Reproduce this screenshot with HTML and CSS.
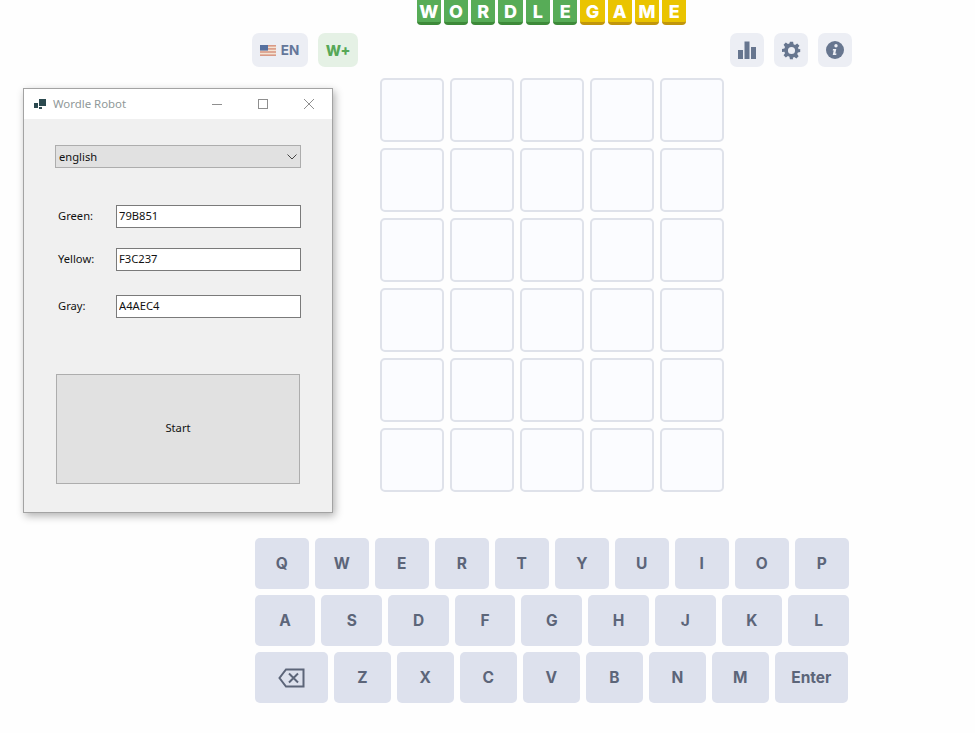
FILE: index.html
```html
<!DOCTYPE html>
<html lang="en">
<head>
<meta charset="UTF-8">
<meta name="viewport" content="width=device-width, initial-scale=1.0">
<title>Wordle Game</title>
<link rel="stylesheet" href="styles.css">
</head>
<body>
<div class="app">
    <div class="logo">
        <span class="tile">W</span><span class="tile">O</span><span class="tile">R</span><span class="tile">D</span><span class="tile">L</span><span class="tile">E</span>
        <span class="tile gold">G</span><span class="tile gold">A</span><span class="tile gold">M</span><span class="tile gold">E</span>
    </div>

    <div class="toolbar">
        <div class="tool-group">
            <button class="tool lang">
                <svg width="16" height="11" viewBox="0 0 16 11">
                    <rect width="16" height="11" fill="#f4e3d3"/>
                    <rect y="0" width="16" height="1.6" fill="#d99a86"/>
                    <rect y="3.1" width="16" height="1.6" fill="#d99a86"/>
                    <rect y="6.2" width="16" height="1.6" fill="#d99a86"/>
                    <rect y="9.4" width="16" height="1.6" fill="#d99a86"/>
                    <rect width="8" height="5.6" fill="#56709f"/>
                </svg>
                EN
            </button>
            <button class="tool plus">W+</button>
        </div>
        <div class="tool-group">
            <button class="tool icon">
                <svg width="18" height="18" viewBox="0 0 18 18" fill="#67768f">
                    <rect y="9" width="5" height="9"/>
                    <rect x="6.5" y="0.5" width="5" height="17.5"/>
                    <rect x="13" y="6" width="5" height="12"/>
                </svg>
            </button>
            <button class="tool icon">
                <svg width="19" height="19" viewBox="0 0 24 24" fill="#67768f">
                    <path fill-rule="evenodd" d="M10 1h4l.6 3.1 1.9.8 2.7-1.8 2.8 2.8-1.8 2.7.8 1.9L23 10v4l-3 .6-.8 1.9 1.8 2.7-2.8 2.8-2.7-1.8-1.9.8L14 23h-4l-.6-3.1-1.9-.8-2.7 1.8-2.8-2.8 1.8-2.7-.8-1.9L0 14v-4l3-.6.8-1.9L2 4.8 4.800 2l2.700 1.800 1.900-.8zM12 7.500a4.500 4.500 0 1 0 0 9 4.500 4.500 0 0 0 0-9z"/>
                </svg>
            </button>
            <button class="tool icon">
                <svg width="18" height="18" viewBox="0 0 18 18">
                    <circle cx="9" cy="9" r="9" fill="#67768f"/>
                    <circle cx="10" cy="4.800" r="1.700" fill="#eceef4"/>
                    <path d="M7 8h3.300l-1 4.600h1.200l-.3 1.400H6.700l1-4.600H6.700z" fill="#eceef4"/>
                </svg>
            </button>
        </div>
    </div>

    <div class="board" id="board"></div>

    <div class="keyboard">
        <div class="key-row">
            <button class="key">Q</button><button class="key">W</button><button class="key">E</button><button class="key">R</button><button class="key">T</button><button class="key">Y</button><button class="key">U</button><button class="key">I</button><button class="key">O</button><button class="key">P</button>
        </div>
        <div class="key-row">
            <button class="key">A</button><button class="key">S</button><button class="key">D</button><button class="key">F</button><button class="key">G</button><button class="key">H</button><button class="key">J</button><button class="key">K</button><button class="key">L</button>
        </div>
        <div class="key-row last">
            <button class="key wide">
                <svg width="27" height="20" viewBox="0 0 27 20" fill="none" stroke="#5c6579" stroke-width="2">
                    <path d="M25.500 1.500H8L1.500 10 8 18.500h17.500z"/>
                    <path d="M11 5.500l9 9M20 5.500l-9 9"/>
                </svg>
            </button>
            <button class="key">Z</button><button class="key">X</button><button class="key">C</button><button class="key">V</button><button class="key">B</button><button class="key">N</button><button class="key">M</button>
            <button class="key wide">Enter</button>
        </div>
    </div>
</div>

<div class="window">
    <div class="titlebar">
        <svg class="app-icon" width="12" height="11" viewBox="0 0 12 11" fill="#2c4a50">
            <rect y="4" width="4" height="5"/>
            <rect x="5" y="0" width="7" height="7"/>
            <rect x="5" y="8" width="3" height="2"/>
        </svg>
        <span class="title">Wordle Robot</span>
        <div class="win-controls">
            <svg width="12" height="12" viewBox="0 0 12 12" stroke="#8f8f8f" fill="none"><path d="M1 6.500h10"/></svg>
            <svg width="12" height="12" viewBox="0 0 12 12" stroke="#8f8f8f" fill="none"><rect x="1.500" y="1.500" width="9" height="9"/></svg>
            <svg width="12" height="12" viewBox="0 0 12 12" stroke="#8f8f8f" fill="none"><path d="M1 1l10 10M11 1L1 11"/></svg>
        </div>
    </div>
    <div class="win-body">
        <div class="combo">
            <span>english</span>
            <svg width="10" height="6" viewBox="0 0 10 6" fill="none" stroke="#444"><path d="M.5.500L5 5l4.500-4.500"/></svg>
        </div>
        <div class="field first"><label>Green:</label><input type="text" value="79B851"></div>
        <div class="field"><label>Yellow:</label><input type="text" value="F3C237"></div>
        <div class="field gray"><label>Gray:</label><input type="text" value="A4AEC4"></div>
        <button class="start">Start</button>
    </div>
</div>

<script>
    // 6 rows of 5 empty cells
    const board = document.getElementById('board');
    for (let i = 0; i < 30; i++) {
        const cell = document.createElement('div');
        cell.className = 'cell';
        board.appendChild(cell);
    }
</script>
</body>
</html>
```

FILE: styles.css
```css
body {
    margin: 0;
    height: 733px;
    overflow: hidden;
    background-color: #fefefe;
    font-family: Inter, "Liberation Sans", sans-serif;
}
button {
    border: none;
    padding: 0;
    cursor: pointer;
    font-family: inherit;
}
.app {
    width: 600px;
    margin-left: 252px;
}
.logo {
    display: flex;
    justify-content: center;
    gap: 3px;
    height: 25px;
    padding-right: 1px;
}
.tile {
    width: 24.300px;
    height: 22px;
    border-bottom: 3px solid #3d8a39;
    border-radius: 0 0 4px 4px;
    background-color: #57ac57;
    color: #fff;
    font-size: 18px;
    font-weight: 800;
    line-height: 24px;
    text-align: center;
}
.tile.gold {
    background-color: #eac400;
    border-bottom-color: #c1960b;
}
.toolbar {
    display: flex;
    justify-content: space-between;
    margin-top: 8px;
}
.tool-group {
    display: flex;
    gap: 10px;
}
.tool {
    display: flex;
    align-items: center;
    justify-content: center;
    height: 34px;
    border-radius: 7px;
    background-color: #eceef4;
}
.tool.lang {
    gap: 5px;
    width: 56px;
    padding-right: 1px;
    color: #64779a;
    font-size: 13.500px;
    font-weight: 700;
}
.tool.plus {
    width: 40px;
    background-color: #e5f1e5;
    color: #57a857;
    font-size: 14.500px;
    font-weight: 800;
}
.tool.icon {
    width: 34px;
}
.board {
    display: grid;
    grid-template-columns: repeat(5, 64px);
    grid-auto-rows: 64px;
    gap: 6px;
    justify-content: center;
    margin-top: 11px;
}
.cell {
    box-sizing: border-box;
    border: 2px solid #dfe2ea;
    border-radius: 5px;
    background-color: #fbfcff;
}
.keyboard {
    display: flex;
    flex-direction: column;
    gap: 6px;
    width: 594px;
    margin: 46px 0 0 2.800px;
}
.key-row {
    display: flex;
    gap: 6px;
}
.key {
    flex: 1;
    display: flex;
    align-items: center;
    justify-content: center;
    height: 51px;
    border-radius: 5px;
    background-color: #dde1ed;
    color: #5c6579;
    font-size: 15.500px;
    font-weight: 700;
}
.key-row.last {
    padding-right: 1px;
}
.key-row.last .key {
    flex: 0 0 57px;
}
.key-row.last .key.wide {
    flex: 0 0 73px;
}

/* desktop window on top of the page */
.window {
    position: absolute;
    left: 23px;
    top: 88px;
    box-sizing: border-box;
    width: 310px;
    height: 425px;
    border: 1px solid #a3a3a3;
    background-color: #f0f0f0;
    box-shadow: 2px 3px 8px rgba(0, 0, 0, 0.3);
    font-family: "Noto Sans", "Open Sans", sans-serif;
    font-size: 11.200px;
    color: #111;
}
.titlebar {
    display: flex;
    align-items: center;
    height: 30px;
    padding-left: 10px;
    background-color: #fff;
}
.app-icon {
    margin-right: 7px;
}
.title {
    padding-bottom: 2px;
    color: #8f9898;
    font-size: 11.400px;
}
.win-controls {
    display: flex;
    gap: 34px;
    margin-left: auto;
    margin-right: 17px;
}
.win-body {
    padding: 26px 31px 0;
}
.combo {
    display: flex;
    align-items: center;
    justify-content: space-between;
    box-sizing: border-box;
    height: 23px;
    padding: 0 3px;
    border: 1px solid #adadad;
    background-color: #e1e1e1;
}
.combo svg {
    margin-right: 0;
}
.field {
    display: flex;
    align-items: center;
    margin-top: 20px;
}
.field.first {
    margin-top: 37px;
}
.field.gray {
    margin-top: 24px;
}
.field label {
    width: 58px;
    margin-left: 3px;
    padding-bottom: 2px;
}
.field input {
    box-sizing: border-box;
    width: 185px;
    height: 23px;
    padding: 0 2px 2px;
    border: 1px solid #7a7a7a;
    background-color: #fff;
    font-family: inherit;
    font-size: 11.200px;
    color: #111;
}
.start {
    display: block;
    box-sizing: border-box;
    width: 244px;
    height: 110px;
    margin: 56px 0 0 1px;
    padding-bottom: 3px;
    border: 1px solid #adadad;
    background-color: #e1e1e1;
    font-size: 11.200px;
    color: #111;
}
```
